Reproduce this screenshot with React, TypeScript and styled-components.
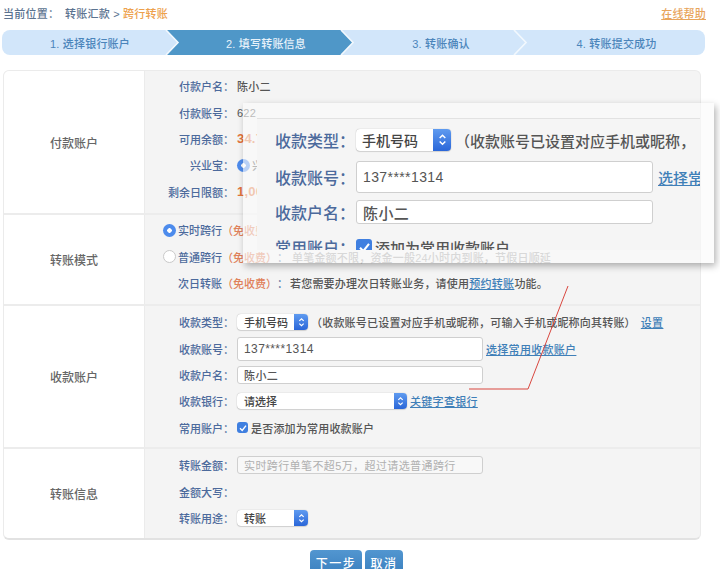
import React from "react";
import styled, { createGlobalStyle } from "styled-components";

const GlobalStyle = createGlobalStyle`
  html, body {
    margin: 0;
    height: 569px;
    overflow: hidden;
    background: #fff;
  }
  body {
    font-family: "Liberation Sans", "Noto Sans CJK SC", sans-serif;
    font-size: 11px;
    color: #555;
  }
`;

const Page = styled.div`
  position: relative;
  width: 720px;
  height: 569px;
  overflow: hidden;
`;

const Breadcrumb = styled.div`
  display: flex;
  align-items: center;
  height: 26px;
  padding: 0 14px 0 3px;
  font-size: 11px;
  font-weight: 500;
  color: #5b7390;
`;

const Crumb = styled.span<{ $current?: boolean }>`
  color: ${p => (p.$current ? "#eda14c" : "#5b7390")};
  letter-spacing: 0.25px;
  margin-left: ${p => (p.$current ? "3px" : "0")};
`;

const CrumbLead = styled.span`
  width: 62px;
  letter-spacing: 0.25px;
`;

const HelpLink = styled.a`
  margin-left: auto;
  color: #e8a55c;
  text-decoration: underline;
  letter-spacing: 0.2px;
`;

const StepBar = styled.div`
  display: flex;
  width: 703px;
  height: 25px;
  margin: 4px 0 15px 2px;
  background: #d2e6fa;
  border-radius: 8px;
  overflow: hidden;
`;

const Step = styled.div<{ $width: number; $pad: number; $active?: boolean }>`
  position: relative;
  display: flex;
  align-items: center;
  justify-content: center;
  box-sizing: border-box;
  width: ${p => p.$width}px;
  padding-left: ${p => p.$pad}px;
  font-size: 11px;
  font-weight: 500;
  letter-spacing: 0.2px;
  color: ${p => (p.$active ? "#e8f2fa" : "#4b85bb")};

  &::before {
    content: "";
    display: ${p => (p.$active ? "block" : "none")};
    position: absolute;
    inset: 0 -1px 0 0;
    background: #4f97c8;
    clip-path: polygon(0 0, calc(100% - 12px) 0, 100% 50%, calc(100% - 12px) 100%, 0 100%, 12px 50%);
  }
`;

const StepText = styled.span`
  position: relative;
`;

const Chevron = styled.svg<{ $left: number }>`
  position: absolute;
  left: ${p => p.$left}px;
  top: 0;
  width: 15px;
  height: 25px;
  z-index: 1;
`;

const StepChevron = ({ left }: { left: number }) => (
  <Chevron $left={left} viewBox="0 0 15 25">
    <polyline points="1,0 13,12.5 1,25" fill="none" stroke="#f2f8fd" strokeWidth="1.6" />
  </Chevron>
);

const Card = styled.div`
  width: 698px;
  margin-left: 3px;
  box-sizing: border-box;
  border: 1px solid #ebebeb;
  border-bottom: 2px solid #e2e2e2;
  border-radius: 6px;
  overflow: hidden;
  background: #ececec;
`;

const Section = styled.div<{ $height: number; $last?: boolean }>`
  display: flex;
  height: ${p => p.$height}px;
  margin-bottom: ${p => (p.$last ? 0 : 2)}px;
`;

const SectionTitle = styled.div`
  display: flex;
  align-items: center;
  justify-content: center;
  width: 140px;
  flex-shrink: 0;
  background: #fff;
  border-right: 1px solid #ebebeb;
  font-size: 12px;
  font-weight: 500;
  color: #666;
`;

const SectionBody = styled.div<{ $top: number }>`
  flex: 1;
  padding-top: ${p => p.$top}px;
  background: #f4f4f4;
`;

const Row = styled.div`
  display: flex;
  align-items: center;
  height: 26.4px;
  white-space: nowrap;
`;

const FieldLabel = styled.label`
  box-sizing: border-box;
  flex-shrink: 0;
  width: 89px;
  margin-right: 3px;
  text-align: right;
  color: #4c6a9c;
  font-weight: 500;
`;

const Value = styled.span<{ $accent?: boolean; $gap?: number }>`
  margin-left: ${p => p.$gap ?? 0}px;
  color: ${p => (p.$accent ? "#e2753c" : "#555")};
  font-weight: ${p => (p.$accent ? 700 : 500)};
  font-size: ${p => (p.$accent ? "13px" : "11px")};
  letter-spacing: 0.2px;
`;

const Note = styled.span<{ $muted?: boolean; $gap: number }>`
  color: ${p => (p.$muted ? "#a0a0a0" : "#555")};
  font-weight: 500;
  margin-left: ${p => p.$gap}px;
  letter-spacing: 0.2px;
`;

const TextLink = styled.a<{ $gap?: number }>`
  color: #3f7fb8;
  text-decoration: underline;
  font-weight: 500;
  letter-spacing: 0.3px;
  margin-left: ${p => p.$gap ?? 0}px;
`;

const Radio = styled.span<{ $on?: boolean }>`
  flex-shrink: 0;
  box-sizing: border-box;
  width: 13px;
  height: 13px;
  border-radius: 50%;
  margin-right: 2px;
  background: ${p =>
    p.$on ? "radial-gradient(circle, #fff 0 2px, #4d8bec 2.5px)" : "#fff"};
  border: ${p => (p.$on ? "0" : "1px solid #c9c9c9")};
`;

const ModeRow = styled(Row)`
  padding-left: 18px;
`;

const ModeName = styled.span<{ $indent?: boolean }>`
  margin-left: ${p => (p.$indent ? "15px" : "0")};
  color: #4c6a9c;
  font-weight: 500;
`;

const Free = styled.span`
  color: #e0815a;
  font-weight: 500;
`;

const SelectBox = styled.div<{ $width: number; $height: number; $size?: number }>`
  display: flex;
  align-items: center;
  flex-shrink: 0;
  box-sizing: border-box;
  width: ${p => p.$width}px;
  height: ${p => p.$height}px;
  padding-left: ${p => (p.$size ? 6 : 7)}px;
  background: #fff;
  border-radius: 4px;
  box-shadow: 0 0 1px rgba(0, 0, 0, 0.35), 0 1px 1px rgba(0, 0, 0, 0.12);
  font-size: ${p => p.$size ?? 11}px;
  font-weight: 500;
  color: #444;
  overflow: hidden;
`;

const Stepper = styled.span<{ $width: number }>`
  display: flex;
  align-items: center;
  justify-content: center;
  width: ${p => p.$width}px;
  align-self: stretch;
  margin-left: auto;
  background: linear-gradient(#5f9bf0, #2a66d8);
`;

const StepperIcon = ({ size }: { size: number }) => (
  <svg width={size} height={size * 1.5} viewBox="0 0 8 12">
    <polyline points="1.5,4.5 4,2 6.5,4.5" fill="none" stroke="#fff" strokeWidth="1.3" />
    <polyline points="1.5,7.5 4,10 6.5,7.5" fill="none" stroke="#fff" strokeWidth="1.3" />
  </svg>
);

const Select = (props: {
  width: number;
  height: number;
  stepper: number;
  size?: number;
  children: React.ReactNode;
}) => (
  <SelectBox $width={props.width} $height={props.height} $size={props.size}>
    {props.children}
    <Stepper $width={props.stepper}>
      <StepperIcon size={props.stepper > 14 ? 9 : 7} />
    </Stepper>
  </SelectBox>
);

const TextBox = styled.div<{ $width: number; $height: number; $size?: number; $placeholder?: boolean }>`
  display: flex;
  align-items: center;
  flex-shrink: 0;
  box-sizing: border-box;
  width: ${p => p.$width}px;
  height: ${p => p.$height}px;
  padding-left: 6px;
  background: ${p => (p.$placeholder ? "#f8f8f8" : "#fff")};
  border: 1px solid #cfcfcf;
  border-radius: 3px;
  font-size: ${p => p.$size ?? 11}px;
  font-weight: ${p => (p.$placeholder ? 400 : 500)};
  letter-spacing: 0.4px;
  color: ${p => (p.$placeholder ? "#b0b0b0" : "#555")};
`;

const Check = styled.span<{ $size: number }>`
  display: inline-flex;
  align-items: center;
  justify-content: center;
  flex-shrink: 0;
  width: ${p => p.$size}px;
  height: ${p => p.$size}px;
  border-radius: 3px;
  background: #3f7fe0;
`;

const CheckMark = ({ size }: { size: number }) => (
  <svg width={size} height={size} viewBox="0 0 10 10">
    <polyline points="2,5.2 4.2,7.4 8,2.6" fill="none" stroke="#fff" strokeWidth="1.4" />
  </svg>
);

const Actions = styled.div`
  display: flex;
  gap: 3px;
  margin: 10px 0 0 310px;
`;

const ActionButton = styled.button<{ $width: number }>`
  width: ${p => p.$width}px;
  height: 24px;
  padding: 0;
  border: 0;
  border-radius: 4px;
  background: linear-gradient(#5296d0, #3b80bf);
  color: #fff;
  font: 500 12px "Liberation Sans", "Noto Sans CJK SC", sans-serif;
  letter-spacing: 1.5px;
`;

/* magnified copy of the payee form, laid over the page */
const Zoomed = styled.div`
  position: absolute;
  left: 243px;
  top: 103px;
  box-sizing: border-box;
  width: 471px;
  height: 160px;
  padding: 15px 14px 13px;
  background: rgba(250, 250, 250, 0.62);
  box-shadow: 2px 3px 7px rgba(0, 0, 0, 0.3);
`;

const ZoomedInner = styled.div`
  box-sizing: border-box;
  height: 132px;
  padding: 9px 0 0 18px;
  background: #f5f5f5;
  border-top: 1px solid #e2e2e2;
  overflow: hidden;
`;

const ZoomedRow = styled.div<{ $height: number }>`
  display: flex;
  align-items: center;
  height: ${p => p.$height}px;
  white-space: nowrap;
`;

const ZoomedLabel = styled.span`
  width: 81px;
  flex-shrink: 0;
  color: #4c6a9c;
  font-size: 16px;
  font-weight: 500;
`;

const ZoomedNote = styled.span`
  margin-left: 4px;
  font-size: 15px;
  font-weight: 500;
  color: #555;
`;

const ZoomedLink = styled.a`
  margin-left: 5px;
  font-size: 15px;
  font-weight: 500;
  color: #3f7fb8;
  text-decoration: underline;
`;

const ZoomedCheckText = styled.span`
  margin-left: 3px;
  font-size: 15px;
  font-weight: 500;
  color: #555;
`;

const Annotation = styled.svg`
  position: absolute;
  left: 0;
  top: 0;
  width: 720px;
  height: 569px;
  pointer-events: none;
`;

export default function App() {
  return (
    <Page>
      <GlobalStyle />
      <Breadcrumb>
        <CrumbLead>当前位置：</CrumbLead>
        <Crumb>转账汇款 &gt;</Crumb>
        <Crumb $current>跨行转账</Crumb>
        <HelpLink>在线帮助</HelpLink>
      </Breadcrumb>

      <StepBar>
        <Step $width={164} $pad={12}>
          <StepText>1. 选择银行账户</StepText>
        </Step>
        <Step $width={186} $pad={14} $active>
          <StepChevron left={-1} />
          <StepText>2. 填写转账信息</StepText>
        </Step>
        <Step $width={162} $pad={16}>
          <StepChevron left={-12} />
          <StepText>3. 转账确认</StepText>
        </Step>
        <Step $width={191} $pad={14}>
          <StepChevron left={-1} />
          <StepText>4. 转账提交成功</StepText>
        </Step>
      </StepBar>

      <Card>
        <Section $height={142}>
          <SectionTitle>付款账户</SectionTitle>
          <SectionBody $top={2}>
            <Row>
              <FieldLabel>付款户名：</FieldLabel>
              <Value>陈小二</Value>
            </Row>
            <Row>
              <FieldLabel>付款账号：</FieldLabel>
              <Value>622</Value>
            </Row>
            <Row>
              <FieldLabel>可用余额：</FieldLabel>
              <Value $accent>34.7</Value>
            </Row>
            <Row>
              <FieldLabel>兴业宝：</FieldLabel>
              <Radio $on />
              <Value>兴</Value>
            </Row>
            <Row>
              <FieldLabel>剩余日限额：</FieldLabel>
              <Value $accent>1,00</Value>
            </Row>
          </SectionBody>
        </Section>

        <Section $height={89}>
          <SectionTitle>转账模式</SectionTitle>
          <SectionBody $top={2}>
            <ModeRow>
              <Radio $on />
              <ModeName>实时跨行</ModeName>
              <Free>（免收费）</Free>
            </ModeRow>
            <ModeRow>
              <Radio />
              <ModeName>普通跨行</ModeName>
              <Free>（免收费）</Free>
              <ModeName>：</ModeName>
              <Note $muted $gap={4}>单笔金额不限，资金一般24小时内到账，节假日顺延</Note>
            </ModeRow>
            <ModeRow>
              <ModeName $indent>次日转账</ModeName>
              <Free>（免收费）</Free>
              <ModeName>：</ModeName>
              <Value $gap={2}>
                若您需要办理次日转账业务，请使用<TextLink>预约转账</TextLink>功能。
              </Value>
            </ModeRow>
          </SectionBody>
        </Section>

        <Section $height={141}>
          <SectionTitle>收款账户</SectionTitle>
          <SectionBody $top={3}>
            <Row>
              <FieldLabel>收款类型：</FieldLabel>
              <Select width={71} height={16} stepper={14}>
                手机号码
              </Select>
              <Note $gap={3}>（收款账号已设置对应手机或昵称，可输入手机或昵称向其转账）</Note>
              <TextLink $gap={5}>设置</TextLink>
            </Row>
            <Row>
              <FieldLabel>收款账号：</FieldLabel>
              <TextBox $width={246} $height={24} $size={12}>
                137****1314
              </TextBox>
              <TextLink $gap={3}>选择常用收款账户</TextLink>
            </Row>
            <Row>
              <FieldLabel>收款户名：</FieldLabel>
              <TextBox $width={246} $height={18}>
                陈小二
              </TextBox>
            </Row>
            <Row>
              <FieldLabel>收款银行：</FieldLabel>
              <Select width={170} height={16} stepper={13}>
                请选择
              </Select>
              <TextLink $gap={3}>关键字查银行</TextLink>
            </Row>
            <Row>
              <FieldLabel>常用账户：</FieldLabel>
              <Check $size={11}>
                <CheckMark size={10} />
              </Check>
              <Value $gap={3}>是否添加为常用收款账户</Value>
            </Row>
          </SectionBody>
        </Section>

        <Section $height={89} $last>
          <SectionTitle>转账信息</SectionTitle>
          <SectionBody $top={3}>
            <Row>
              <FieldLabel>转账金额：</FieldLabel>
              <TextBox $width={246} $height={18} $placeholder>
                实时跨行单笔不超5万，超过请选普通跨行
              </TextBox>
            </Row>
            <Row>
              <FieldLabel>金额大写：</FieldLabel>
            </Row>
            <Row>
              <FieldLabel>转账用途：</FieldLabel>
              <Select width={71} height={16} stepper={14}>
                转账
              </Select>
            </Row>
          </SectionBody>
        </Section>
      </Card>

      <Actions>
        <ActionButton $width={52}>下一步</ActionButton>
        <ActionButton $width={38}>取消</ActionButton>
      </Actions>

      <Zoomed>
        <ZoomedInner>
          <ZoomedRow $height={24}>
            <ZoomedLabel>收款类型：</ZoomedLabel>
            <Select width={95} height={22} stepper={18} size={14}>
              手机号码
            </Select>
            <ZoomedNote>（收款账号已设置对应手机或昵称，</ZoomedNote>
          </ZoomedRow>
          <ZoomedRow $height={50}>
            <ZoomedLabel>收款账号：</ZoomedLabel>
            <TextBox $width={297} $height={32} $size={14}>
              137****1314
            </TextBox>
            <ZoomedLink>选择常用</ZoomedLink>
          </ZoomedRow>
          <ZoomedRow $height={20}>
            <ZoomedLabel>收款户名：</ZoomedLabel>
            <TextBox $width={297} $height={24} $size={15}>
              陈小二
            </TextBox>
          </ZoomedRow>
          <ZoomedRow $height={50}>
            <ZoomedLabel>常用账户：</ZoomedLabel>
            <Check $size={16}>
              <CheckMark size={15} />
            </Check>
            <ZoomedCheckText>添加为常用收款账户</ZoomedCheckText>
          </ZoomedRow>
        </ZoomedInner>
      </Zoomed>

      <Annotation viewBox="0 0 720 569">
        <polyline points="568,286 528,389 469,389" fill="none" stroke="#d9473f" strokeWidth="1" />
      </Annotation>
    </Page>
  );
}
